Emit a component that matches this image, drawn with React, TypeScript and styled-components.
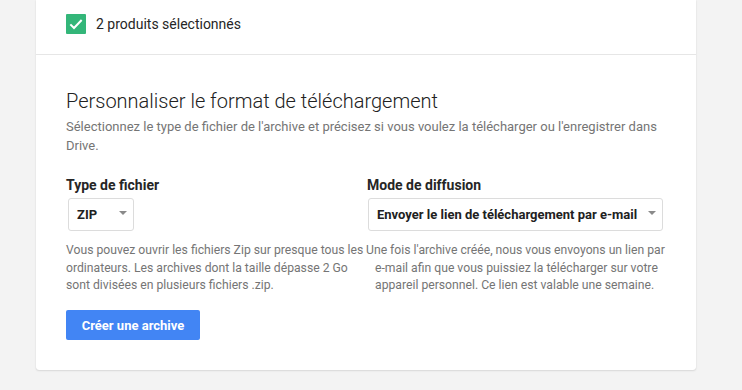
import React from "react";
import styled, { createGlobalStyle } from "styled-components";

const Global = createGlobalStyle`
  html, body { margin: 0; padding: 0; background: #f3f3f3; }
  body { font-family: Roboto, "Noto Sans", Arial, sans-serif; color: #212121; }
  * { box-sizing: border-box; }
`;

const Page = styled.div`
  padding: 0 46px 19px 36px;
`;

const Card = styled.div`
  background: #fff;
  border-radius: 0 0 3px 3px;
  box-shadow: 0 0 1px rgba(0, 0, 0, 0.14), 0 1px 2px rgba(0, 0, 0, 0.1);
`;

const SelectedRow = styled.div`
  display: flex;
  align-items: center;
  gap: 10px;
  padding: 14px 30px 20px;
  font-size: 14px;
  line-height: 20px;
  color: #262626;
`;

const Check = styled.span`
  width: 20px;
  height: 20px;
  background: #33b679;
  display: inline-flex;
  align-items: center;
  justify-content: center;
  border-radius: 1px;
`;

const Section = styled.div`
  border-top: 1px solid #e6e6e6;
  padding: 32px 30px 30px;
`;

const Heading = styled.h2`
  margin: 0;
  font-size: 20px;
  font-weight: 300;
  line-height: 28px;
  color: #212121;
`;

const Lead = styled.p`
  margin: 2px 0 0;
  font-size: 13px;
  line-height: 19px;
  color: #757575;
`;

const Columns = styled.div`
  display: grid;
  grid-template-columns: 300px 310px;
  margin: 20px -10px 0 0;
`;

const Column = styled.div`
  display: flex;
  flex-direction: column;
  align-items: flex-start;
`;

const Label = styled.div<{ $shift?: number }>`
  font-size: 14px;
  font-weight: 700;
  line-height: 20px;
  color: #262626;
  padding-left: ${(p) => p.$shift ?? 0}px;
`;

const Select = styled.div<{ $width: number; $shift: number }>`
  display: flex;
  align-items: center;
  justify-content: space-between;
  width: ${(p) => p.$width}px;
  height: 33px;
  margin: 3px 0 0 ${(p) => p.$shift}px;
  padding: 0 6px 0 8px;
  border: 1px solid #dcdcdc;
  border-radius: 3px;
  font-size: 13px;
  font-weight: 700;
  color: #212121;
  background: #fff;
`;

const Arrow = styled.span`
  width: 0;
  height: 0;
  border-left: 4px solid transparent;
  border-right: 4px solid transparent;
  border-top: 4px solid #8a8a8a;
  margin-bottom: 3px;
`;

const Help = styled.p<{ $hang?: number }>`
  margin: 11px 0 0;
  font-size: 12.2px;
  line-height: 17.5px;
  color: #757575;
  padding-left: ${(p) => p.$hang ?? 0}px;
  text-indent: ${(p) => -(p.$hang ?? 0)}px;
`;

const Button = styled.button`
  margin-top: 15.5px;
  height: 30px;
  width: 134px;
  border: none;
  border-radius: 2px;
  background: #4285f4;
  color: #fff;
  font-family: Roboto, Arial, sans-serif;
  font-size: 13px;
  font-weight: 700;
  cursor: pointer;
`;

export default function App() {
  return (
    <>
      <Global />
      <Page>
        <Card>
          <SelectedRow>
            <Check>
              <svg width="16" height="16" viewBox="0 0 24 24" fill="none">
                <path d="M3.5 12.5l5.5 5.5L20.5 6" stroke="#fff" strokeWidth="3" />
              </svg>
            </Check>
            2 produits sélectionnés
          </SelectedRow>
          <Section>
            <Heading>Personnaliser le format de téléchargement</Heading>
            <Lead>
              Sélectionnez le type de fichier de l'archive et précisez si vous voulez la télécharger ou
              l'enregistrer dans Drive.
            </Lead>
            <Columns>
              <Column>
                <Label>Type de fichier</Label>
                <Select $width={66} $shift={2}>
                  ZIP
                  <Arrow />
                </Select>
                <Help>
                  Vous pouvez ouvrir les fichiers Zip sur presque tous les ordinateurs. Les archives dont la
                  taille dépasse 2 Go sont divisées en plusieurs fichiers .zip.
                </Help>
              </Column>
              <Column>
                <Label $shift={1}>Mode de diffusion</Label>
                <Select $width={295} $shift={2}>
                  Envoyer le lien de téléchargement par e-mail
                  <Arrow />
                </Select>
                <Help $hang={9}>
                  Une fois l'archive créée, nous vous envoyons un lien par e-mail afin que vous puissiez la
                  télécharger sur votre appareil personnel. Ce lien est valable une semaine.
                </Help>
              </Column>
            </Columns>
            <Button>Créer une archive</Button>
          </Section>
        </Card>
      </Page>
    </>
  );
}
